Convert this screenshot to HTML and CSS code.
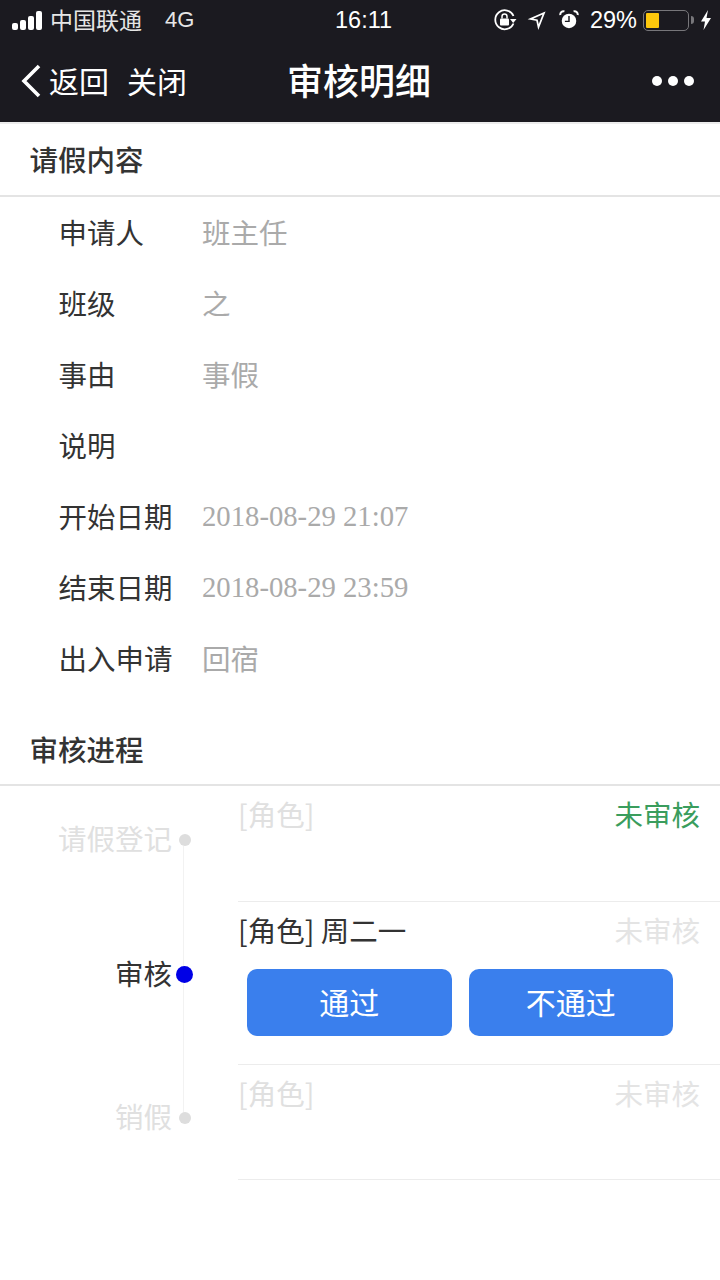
FILE: index.html
```html
<!DOCTYPE html>
<html lang="zh-CN">
<head>
    <meta charset="UTF-8">
    <meta name="viewport" content="width=device-width, initial-scale=1.0">
    <title>审核明细</title>
    <link rel="stylesheet" href="styles.css">
</head>
<body>
    <header class="top">
        <div class="status">
            <div class="status-left">
                <span class="signal"><i></i><i></i><i></i><i></i></span>
                <span class="carrier">中国联通</span>
                <span class="net">4G</span>
            </div>
            <div class="clock">16:11</div>
            <div class="status-right">
                <svg class="ic-lock" viewBox="0 0 24 24" width="24" height="24">
                    <path d="M20.5 15.5A9.5 9.5 0 1 1 20.5 8" fill="none" stroke="#fff" stroke-width="1.8"/>
                    <path d="M23.5 11h-6.5l3.2 4z" fill="#fff"/>
                    <rect x="7" y="10.5" width="9" height="7" rx="1" fill="#fff"/>
                    <path d="M9 10.5V8.5a2.5 2.5 0 0 1 5 0v2" fill="none" stroke="#fff" stroke-width="1.5"/>
                </svg>
                <svg class="ic-loc" viewBox="0 0 20 20" width="20" height="20">
                    <path d="M17 3L3.500 9l6.500 1.200 1.500 6.800z" fill="none" stroke="#fff" stroke-width="1.700"/>
                </svg>
                <svg class="ic-alarm" viewBox="0 0 22 22" width="20" height="20">
                    <circle cx="11" cy="12" r="8" fill="#fff"/>
                    <path d="M11 6.500V12.500H6.500" fill="none" stroke="#1b1a20" stroke-width="1.6"/>
                    <path d="M1.500 5.500A3.500 3.500 0 0 1 6 1.500M20.500 5.500A3.500 3.500 0 0 0 16 1.500" fill="none" stroke="#fff" stroke-width="2.200"/>
                </svg>
                <span class="pct">29%</span>
                <span class="battery"><span class="battery-fill"></span></span>
                <span class="battery-tip"></span>
                <svg class="ic-bolt" viewBox="0 0 12 20" width="12" height="20">
                    <path d="M8 0L1 11.500h4L3.500 20 11 8H6.500z" fill="#fff"/>
                </svg>
            </div>
        </div>
        <nav class="nav">
            <div class="nav-left">
                <svg class="ic-back" viewBox="0 0 22 34" width="22" height="34">
                    <path d="M19 2L4 17l15 15" fill="none" stroke="#fff" stroke-width="3.600"/>
                </svg>
                <span>返回</span>
                <span class="nav-close">关闭</span>
            </div>
            <h1 class="nav-title">审核明细</h1>
            <div class="dots"><i></i><i></i><i></i></div>
        </nav>
    </header>

    <main>
        <h2 class="sec-title">请假内容</h2>
        <div class="info">
            <div class="row"><span class="key">申请人</span><span class="val">班主任</span></div>
            <div class="row"><span class="key">班级</span><span class="val">之</span></div>
            <div class="row"><span class="key">事由</span><span class="val">事假</span></div>
            <div class="row"><span class="key">说明</span><span class="val"></span></div>
            <div class="row"><span class="key">开始日期</span><span class="val date">2018-08-29 21:07</span></div>
            <div class="row"><span class="key">结束日期</span><span class="val date">2018-08-29 23:59</span></div>
            <div class="row"><span class="key">出入申请</span><span class="val">回宿</span></div>
        </div>

        <h2 class="sec-title sec-two">审核进程</h2>
        <div class="steps">
            <div class="line"></div>

            <div class="step step-first faded">
                <div class="step-name"><span>请假登记</span><i class="dot"></i></div>
                <div class="step-body">
                    <div class="step-head">
                        <span>[角色]</span>
                        <span class="state ok">未审核</span>
                    </div>
                </div>
            </div>

            <div class="step step-now">
                <div class="step-name"><span>审核</span><i class="dot"></i></div>
                <div class="step-body">
                    <div class="step-head">
                        <span>[角色] 周二一</span>
                        <span class="state">未审核</span>
                    </div>
                    <div class="btns">
                        <button class="btn">通过</button>
                        <button class="btn">不通过</button>
                    </div>
                </div>
            </div>

            <div class="step step-last faded">
                <div class="step-name"><span>销假</span><i class="dot"></i></div>
                <div class="step-body">
                    <div class="step-head">
                        <span>[角色]</span>
                        <span class="state">未审核</span>
                    </div>
                </div>
            </div>
        </div>
    </main>
</body>
</html>
```

FILE: styles.css
```css
* {
    box-sizing: border-box;
}

body {
    margin: 0;
    background-color: #fff;
    color: #333;
    font-family: "Noto Sans CJK SC", "Noto Sans", sans-serif;
    font-size: 28.5px;
}

i {
    display: block;
}

.top {
    background-color: #1b1a20;
    color: #fff;
    height: 122px;
}

.status {
    height: 40px;
    padding: 0 8px 0 12px;
    display: flex;
    align-items: center;
    justify-content: space-between;
    position: relative;
}

.status-left, .status-right {
    display: flex;
    align-items: center;
    font-size: 22px;
    color: #e6e6e6;
}

.signal {
    display: flex;
    align-items: flex-end;
    gap: 2px;
    margin-right: 8px;
}

.signal i {
    width: 6px;
    border-radius: 2px;
    background-color: #fff;
}

.signal i:nth-child(1) { height: 7px; }
.signal i:nth-child(2) { height: 10px; }
.signal i:nth-child(3) { height: 14px; }
.signal i:nth-child(4) { height: 19px; }

.carrier {
    font-size: 23px;
    line-height: 30px;
    margin-top: -3px;
}

.net {
    margin-left: 23px;
    font-family: "Liberation Sans", sans-serif;
}

.clock {
    position: absolute;
    left: 335px;
    top: 5px;
    font-size: 23.500px;
    line-height: 30px;
    font-weight: 500;
    font-family: "Liberation Sans", sans-serif;
}

.status-right svg {
    flex: none;
}

.ic-loc {
    margin-left: 10px;
}

.ic-alarm {
    margin-left: 12px;
}

.pct {
    margin-left: 11px;
    font-size: 23.500px;
    font-family: "Liberation Sans", sans-serif;
    color: #fff;
}

.battery {
    width: 46px;
    height: 21px;
    margin-left: 6px;
    padding: 2px;
    border: 1.5px solid #77767a;
    border-radius: 5px;
}

.battery-fill {
    display: block;
    width: 13px;
    height: 100%;
    background-color: #fdc70c;
    border-radius: 1px;
}

.battery-tip {
    width: 3px;
    height: 8px;
    margin-left: 2px;
    background-color: #77767a;
    border-radius: 0 3px 3px 0;
}

.ic-bolt {
    margin-left: 6px;
}

.nav {
    height: 82px;
    padding: 0 26px 0 20px;
    display: flex;
    align-items: center;
    justify-content: space-between;
    position: relative;
}

.nav-left {
    display: flex;
    align-items: center;
    font-size: 30px;
}

.nav-left span {
    margin-bottom: 2px;
}

.ic-back {
    margin-right: 7px;
}

.nav-close {
    margin-left: 18px;
}

.nav-title {
    position: absolute;
    left: 287px;
    top: 15px;
    margin: 0;
    font-size: 36px;
    line-height: 48px;
    font-weight: 500;
}

.dots {
    display: flex;
    gap: 6px;
}

.dots i {
    width: 10px;
    height: 10px;
    border-radius: 50%;
    background-color: #fff;
}

.sec-title {
    margin: 0;
    height: 75px;
    padding: 0 29.500px 2px;
    display: flex;
    align-items: center;
    font-size: 28.500px;
    font-weight: 500;
    color: #333;
    border-top: 2px solid #ececec;
    border-bottom: 2px solid #e4e4e4;
}

.sec-two {
    height: 72px;
    padding-bottom: 2px;
    border-top: 0;
}

.info {
    padding: 1px 0 19px;
}

.row {
    height: 71px;
    display: flex;
    align-items: center;
    padding: 0 0 5px 58.500px;
}

.key {
    width: 143.500px;
    color: #333;
}

.val {
    color: #aaa;
}

.date {
    font-family: "Liberation Serif", serif;
    font-size: 28.700px;
    padding-top: 2px;
}

.steps {
    position: relative;
}

.line {
    position: absolute;
    left: 182.500px;
    top: 60px;
    width: 1.500px;
    height: 270px;
    background-color: #f2f2f2;
}

.step {
    display: flex;
}

.step-first {
    height: 116px;
}

.step-now {
    height: 163px;
}

.step-last {
    height: 115px;
}

.step-name {
    width: 238px;
    padding-right: 44px;
    display: flex;
    align-items: center;
    justify-content: flex-end;
    gap: 4px;
}

.step-first .step-name {
    padding-bottom: 8px;
}

.step-now .step-name {
    padding-bottom: 18px;
}

.step-last .step-name {
    padding-bottom: 10px;
}

.step-name span {
    margin-bottom: 5px;
}

.dot {
    width: 12px;
    height: 12px;
    margin: 0 3px;
    border-radius: 50%;
    background-color: #ddd;
    position: relative;
}

.step-now .dot {
    width: 17px;
    height: 17px;
    margin: 0 1px 0 0;
    background-color: #0000e6;
}

.step-body {
    flex: 1;
    border-bottom: 1.500px solid #ececec;
}

.step-head {
    display: flex;
    justify-content: space-between;
    padding: 6px 20px 0 0;
    line-height: 44px;
}

.faded .step-head,
.faded .step-name {
    color: #e0e0e0;
}

.state {
    color: #e4e4e4;
}

.faded .state.ok,
.state.ok {
    color: #3a9d5d;
}

.btns {
    display: flex;
    gap: 17px;
    margin: 17px 0 0 9px;
}

.btn {
    width: 204.500px;
    height: 67px;
    padding: 0 0 4px;
    border: 0;
    border-radius: 10px;
    background-color: #3a7fed;
    color: #fff;
    font-family: inherit;
    font-size: 30px;
}
```
